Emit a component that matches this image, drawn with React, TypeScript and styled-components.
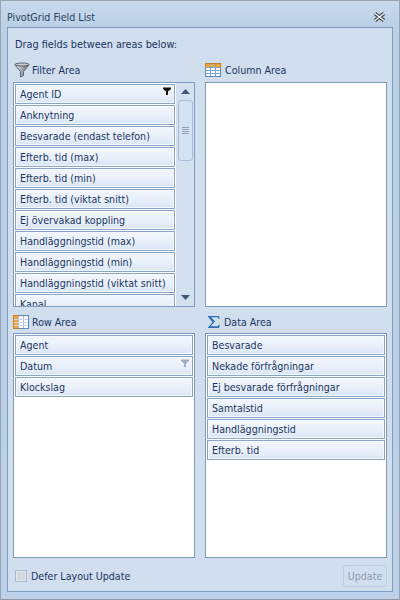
import { createGlobalStyle, styled } from "styled-components";

const GlobalStyle = createGlobalStyle`
    html, body {
        margin: 0;
        padding: 0;
    }
    body {
        font-family: "DejaVu Sans", "Noto Sans", sans-serif;
        font-stretch: condensed;
        font-size: 10.6px;
        color: #1b3560;
    }
`;

const Window = styled.div`
    box-sizing: border-box;
    width: 400px;
    height: 600px;
    display: flex;
    flex-direction: column;
    padding: 0 6px 7px 6px;
    border: 1px solid #9aa5b3;
    border-bottom-color: #8d99a8;
    background: linear-gradient(180deg, #c9d9ec 0, #bad0e6 26px, #bdd2e8 100%);
`;

const TitleBar = styled.div`
    height: 26px;
    flex: none;
    display: flex;
    align-items: center;
    justify-content: space-between;
    padding-top: 5px;
    box-sizing: border-box;
    color: #2b3f58;
`;

const CloseButton = styled.svg`
    width: 13px;
    height: 10px;
    margin-right: 7px;
`;

const Panel = styled.div`
    flex: 1;
    min-height: 0;
    box-sizing: border-box;
    display: flex;
    flex-direction: column;
    padding: 10px 5px 4px 5px;
    border: 1px solid #7f9bbd;
    background: #d0deed;
`;

const Hint = styled.div`
    height: 16px;
    line-height: 14px;
    padding-left: 2px;
    font-size: 10.8px;
`;

const Grid = styled.div`
    flex: none;
    display: grid;
    grid-template-columns: 182px 182px;
    grid-template-rows: 249px 249px;
    column-gap: 10px;
    row-gap: 2px;
    margin-top: 4px;
`;

const Area = styled.section`
    display: flex;
    flex-direction: column;
    min-height: 0;
`;

const AreaHeader = styled.div<{ $inset: number; $gap: number; $drop?: boolean }>`
    height: 24px;
    flex: none;
    box-sizing: border-box;
    display: flex;
    align-items: center;
    gap: ${(p) => p.$gap}px;
    padding-left: ${(p) => p.$inset}px;
    padding-top: ${(p) => (p.$drop ? 2 : 0)}px;
`;

const ListBox = styled.div`
    flex: 1;
    min-height: 0;
    box-sizing: border-box;
    display: flex;
    border: 1px solid #7f9bbd;
    background: #fff;
    overflow: hidden;
`;

const Items = styled.div`
    flex: 1;
    min-width: 0;
    display: flex;
    flex-direction: column;
    gap: 1px;
    padding: 1px;
    overflow: hidden;
`;

const Item = styled.div`
    position: relative;
    flex: none;
    box-sizing: border-box;
    height: 20px;
    line-height: 19px;
    padding-left: 4px;
    border: 1px solid #8aa4c6;
    box-shadow: inset 0 0 0 1px #f4f8fd;
    background: linear-gradient(180deg, #f2f6fc 0%, #e9f0fa 55%, #d9e5f4 100%);
    white-space: nowrap;
`;

const ItemFilter = styled.svg`
    position: absolute;
    top: 2px;
    right: 3px;
    width: 8px;
    height: 8px;
`;

const ScrollBar = styled.div`
    width: 18px;
    flex: none;
    display: flex;
    flex-direction: column;
    align-items: center;
    background: #d3e0ef;
`;

const ScrollArrow = styled.svg`
    width: 9px;
    height: 5px;
    flex: none;
    margin: 6px 0;
`;

const ScrollThumb = styled.div`
    box-sizing: border-box;
    width: 15px;
    height: 61px;
    flex: none;
    display: flex;
    flex-direction: column;
    align-items: center;
    justify-content: center;
    gap: 1px;
    border: 1px solid #a9bdd6;
    border-radius: 3px;
    background: #d5e2f1;
`;

const ThumbLine = styled.span`
    width: 7px;
    height: 1px;
    background: #8ea3bd;
`;

const ScrollTrack = styled.div`
    flex: 1;
`;

const Footer = styled.div`
    flex: 1;
    display: flex;
    align-items: center;
    justify-content: space-between;
    padding: 7px 0 0 2px;
`;

const DeferLabel = styled.label`
    display: flex;
    align-items: center;
    gap: 4px;
`;

const CheckBox = styled.span`
    box-sizing: border-box;
    width: 12px;
    height: 12px;
    border: 1px solid #a8b9cd;
    box-shadow: inset 0 0 0 1px #e3e8ee;
    background: #d4d9de;
`;

const UpdateButton = styled.button`
    box-sizing: border-box;
    width: 44px;
    height: 22px;
    padding: 0;
    border: 1px solid #bccbdd;
    border-radius: 3px;
    background: #d0deed;
    color: #8d9db0;
    font-family: inherit;
    font-stretch: inherit;
    font-size: 10.6px;
`;

const FilterIcon = () => (
    <svg width="16" height="16" viewBox="0 0 16 16">
        <defs>
            <linearGradient id="funnel" x1="0" x2="1" y1="0" y2="0">
                <stop offset="0" stopColor="#e8eaec" />
                <stop offset="0.5" stopColor="#a4a9b0" />
                <stop offset="1" stopColor="#5d636b" />
            </linearGradient>
        </defs>
        <path d="M1 3l5.500 6.500V15l3-1.500V9.500L15 3z" fill="url(#funnel)" stroke="#5e6670" />
        <ellipse cx="8" cy="2.500" rx="7" ry="1.500" fill="#c9cdd2" stroke="#5e6670" />
    </svg>
);

const TableIcon = ({ side }: { side?: boolean }) => (
    <svg width="16" height="14" viewBox="0 0 16 14">
        <rect x="0.500" y="0.500" width="15" height="13" fill="#f8fbfe" stroke="#5f8ac0" />
        {side ? (
            <rect x="0.500" y="0.500" width="5" height="13" fill="#f0a63c" stroke="#c87f22" />
        ) : (
            <rect x="0.500" y="0.500" width="15" height="4" fill="#f0a63c" stroke="#c87f22" />
        )}
        <path d="M5.500 1v12M10.500 1v12" stroke={side ? "#a9bcd4" : "#7fa2cf"} fill="none" />
        <path d="M1 4.500h14M1 7.500h14M1 10.500h14" stroke={side ? "#c9d5e4" : "#7fa2cf"} fill="none" />
    </svg>
);

const SigmaIcon = () => (
    <svg width="12" height="12" viewBox="0 0 12 12">
        <path d="M0 0h11l.6 3h-.8L9.800 1.300H3.200L7 5.600 2.600 10.200h7.200l1.200-1.800h.8L11 12H0v-.8L4.600 6.200 0 .8z" fill="#2a6fb8" />
    </svg>
);

const FunnelMark = ({ color }: { color: string }) => (
    <ItemFilter viewBox="0 0 8 8">
        <path d="M0 0.500h8v1.500L5 4.500V8H3V4.500L0 2z" fill={color} />
    </ItemFilter>
);

const filterFields = [
    "Agent ID",
    "Anknytning",
    "Besvarade (endast telefon)",
    "Efterb. tid (max)",
    "Efterb. tid (min)",
    "Efterb. tid (viktat snitt)",
    "Ej övervakad koppling",
    "Handläggningstid (max)",
    "Handläggningstid (min)",
    "Handläggningstid (viktat snitt)",
    "Kanal",
];

const rowFields = ["Agent", "Datum", "Klockslag"];

const dataFields = [
    "Besvarade",
    "Nekade förfrågningar",
    "Ej besvarade förfrågningar",
    "Samtalstid",
    "Handläggningstid",
    "Efterb. tid",
];

export default function App() {
    return (
        <>
            <GlobalStyle />
            <Window>
                <TitleBar>
                    <span>PivotGrid Field List</span>
                    <CloseButton viewBox="0 0 13 10">
                        <path d="M2 1.500l9 7M11 1.500l-9 7" stroke="#3f444c" strokeWidth="3.500" fill="none" />
                        <path d="M2 1.500l9 7M11 1.500l-9 7" stroke="#f3f5f8" strokeWidth="1.500" fill="none" />
                    </CloseButton>
                </TitleBar>
                <Panel>
                    <Hint>Drag fields between areas below:</Hint>
                    <Grid>
                        <Area>
                            <AreaHeader $inset={1} $gap={2}>
                                <FilterIcon />
                                Filter Area
                            </AreaHeader>
                            <ListBox>
                                <Items>
                                    {filterFields.map((field, i) => (
                                        <Item key={field}>
                                            {field}
                                            {i === 0 ? <FunnelMark color="#111" /> : null}
                                        </Item>
                                    ))}
                                </Items>
                                <ScrollBar>
                                    <ScrollArrow viewBox="0 0 9 5">
                                        <path d="M4.500 0L9 5H0z" fill="#3f5674" />
                                    </ScrollArrow>
                                    <ScrollThumb>
                                        <ThumbLine />
                                        <ThumbLine />
                                        <ThumbLine />
                                        <ThumbLine />
                                    </ScrollThumb>
                                    <ScrollTrack />
                                    <ScrollArrow viewBox="0 0 9 5">
                                        <path d="M0 0h9L4.500 5z" fill="#3f5674" />
                                    </ScrollArrow>
                                </ScrollBar>
                            </ListBox>
                        </Area>
                        <Area>
                            <AreaHeader $inset={0} $gap={4}>
                                <TableIcon />
                                Column Area
                            </AreaHeader>
                            <ListBox />
                        </Area>
                        <Area>
                            <AreaHeader $inset={0} $gap={3} $drop>
                                <TableIcon side />
                                Row Area
                            </AreaHeader>
                            <ListBox>
                                <Items>
                                    {rowFields.map((field) => (
                                        <Item key={field}>
                                            {field}
                                            {field === "Datum" ? <FunnelMark color="#9fb0c4" /> : null}
                                        </Item>
                                    ))}
                                </Items>
                            </ListBox>
                        </Area>
                        <Area>
                            <AreaHeader $inset={3} $gap={4} $drop>
                                <SigmaIcon />
                                Data Area
                            </AreaHeader>
                            <ListBox>
                                <Items>
                                    {dataFields.map((field) => (
                                        <Item key={field}>{field}</Item>
                                    ))}
                                </Items>
                            </ListBox>
                        </Area>
                    </Grid>
                    <Footer>
                        <DeferLabel>
                            <CheckBox />
                            Defer Layout Update
                        </DeferLabel>
                        <UpdateButton disabled>Update</UpdateButton>
                    </Footer>
                </Panel>
            </Window>
        </>
    );
}
